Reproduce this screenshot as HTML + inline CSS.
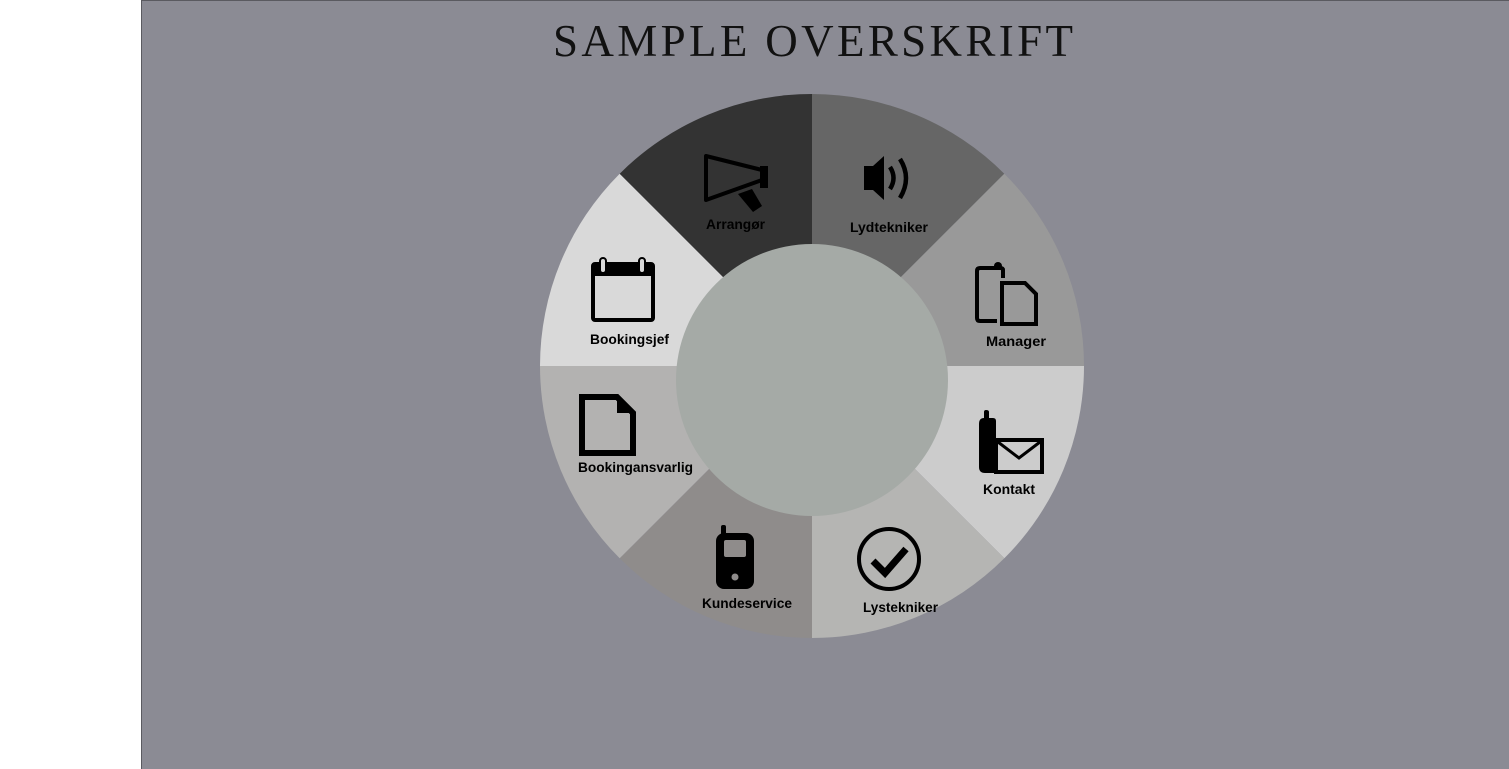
<!DOCTYPE html>
<html><head><meta charset="utf-8"><style>
html,body{margin:0;padding:0;background:#fff;width:1509px;height:769px;overflow:hidden}
svg{display:block}
</style></head><body>
<svg width="1509" height="769" viewBox="0 0 1509 769" xmlns="http://www.w3.org/2000/svg">
<rect x="0" y="0" width="1509" height="769" fill="#fff"/>
<rect x="141.5" y="0.5" width="1368" height="769" fill="#8b8b94" stroke="#5a5a60" stroke-width="1"/>
<text x="813" y="56" text-anchor="middle" font-family="Liberation Serif, serif" font-size="45" fill="#111" textLength="520" lengthAdjust="spacing">SAMPLE OVERSKRIFT</text>
<g transform="translate(812,366)">
<path d="M0 0 L0 -272 A272 272 0 0 1 192.3 -192.3 Z" fill="#666666"/>
<path d="M0 0 L192.3 -192.3 A272 272 0 0 1 272 0 Z" fill="#999999"/>
<path d="M0 0 L272 0 A272 272 0 0 1 192.3 192.3 Z" fill="#cccccc"/>
<path d="M0 0 L192.3 192.3 A272 272 0 0 1 0 272 Z" fill="#b5b5b3"/>
<path d="M0 0 L0 272 A272 272 0 0 1 -192.3 192.3 Z" fill="#8f8c8b"/>
<path d="M0 0 L-192.3 192.3 A272 272 0 0 1 -272 0 Z" fill="#b3b2b1"/>
<path d="M0 0 L-272 0 A272 272 0 0 1 -192.3 -192.3 Z" fill="#d9d9d9"/>
<path d="M0 0 L-192.3 -192.3 A272 272 0 0 1 0 -272 Z" fill="#333333"/>
</g>
<circle cx="812" cy="380" r="136" fill="#a5aaa6"/>
<g font-family="Liberation Sans, sans-serif" font-size="14" font-weight="bold" fill="#000" text-anchor="middle">
<text x="735.5" y="229" textLength="59" lengthAdjust="spacingAndGlyphs">Arrangør</text>
<text x="889" y="232" textLength="78" lengthAdjust="spacingAndGlyphs">Lydtekniker</text>
<text x="1016" y="346" textLength="60" lengthAdjust="spacingAndGlyphs">Manager</text>
<text x="629.5" y="344" textLength="79" lengthAdjust="spacingAndGlyphs">Bookingsjef</text>
<text x="635.5" y="472" textLength="115" lengthAdjust="spacingAndGlyphs">Bookingansvarlig</text>
<text x="1009" y="494" textLength="52" lengthAdjust="spacingAndGlyphs">Kontakt</text>
<text x="747" y="608" textLength="90" lengthAdjust="spacingAndGlyphs">Kundeservice</text>
<text x="900.5" y="612" textLength="75" lengthAdjust="spacingAndGlyphs">Lystekniker</text>
</g>
<path d="M706 156 L706 200 L762 180 L762 170 Z" fill="none" stroke="#000" stroke-width="4" stroke-linejoin="round"/>
<rect x="760" y="166" width="8" height="22" fill="#000"/>
<path d="M738 194 L752 189 L762 206 L753 212 Z" fill="#000"/>
<path d="M864 166 L873 166 L884 156 L884 200 L873 190 L864 190 Z" fill="#000"/>
<path d="M890 167 Q897 178 890 189" fill="none" stroke="#000" stroke-width="4.5"/>
<path d="M900 159 Q912 178 900 198" fill="none" stroke="#000" stroke-width="4.5"/>
<path d="M1003 278 L1003 270 Q1003 268 1000 268 L980 268 Q977 268 977 271 L977 318 Q977 321 980 321 L997 321" fill="none" stroke="#000" stroke-width="4"/>
<circle cx="998" cy="266" r="4" fill="#000"/>
<path d="M1002 283 L1025 283 L1036 294 L1036 324 L1002 324 Z" fill="none" stroke="#000" stroke-width="4"/>
<rect x="593" y="264" width="60" height="56" rx="2" fill="none" stroke="#000" stroke-width="4"/>
<rect x="593" y="264" width="60" height="12" fill="#000"/>
<rect x="600" y="258" width="6" height="15" rx="3" fill="#d9d9d9" stroke="#000" stroke-width="2"/>
<rect x="639" y="258" width="6" height="15" rx="3" fill="#d9d9d9" stroke="#000" stroke-width="2"/>
<path d="M582 397 L617 397 L633 413 L633 453 L582 453 Z" fill="none" stroke="#000" stroke-width="6"/>
<path d="M617 397 L617 413 L633 413 Z" fill="#000"/>
<path d="M984 412 Q984 410 986 410 Q989 410 989 412 L989 418 L993 418 Q996 418 996 421 L996 438 L994 438 L994 473 L985 473 Q979 473 979 467 L979 424 Q979 418 984 418 Z" fill="#000"/>
<rect x="996" y="440" width="46" height="32" fill="#ccc" stroke="#000" stroke-width="4"/>
<path d="M998 442 L1019 458 L1040 442" fill="none" stroke="#000" stroke-width="3"/>
<rect x="721" y="525" width="5" height="12" rx="2" fill="#000"/>
<rect x="716" y="533" width="38" height="56" rx="8" fill="#000"/>
<rect x="724" y="540" width="22" height="17" rx="2" fill="#8f8c8b"/>
<circle cx="735" cy="577" r="3.5" fill="#8f8c8b"/>
<circle cx="889" cy="559" r="30" fill="none" stroke="#000" stroke-width="4"/>
<path d="M873 561 L885 573 L906 549" fill="none" stroke="#000" stroke-width="7"/>
</svg>
</body></html>
